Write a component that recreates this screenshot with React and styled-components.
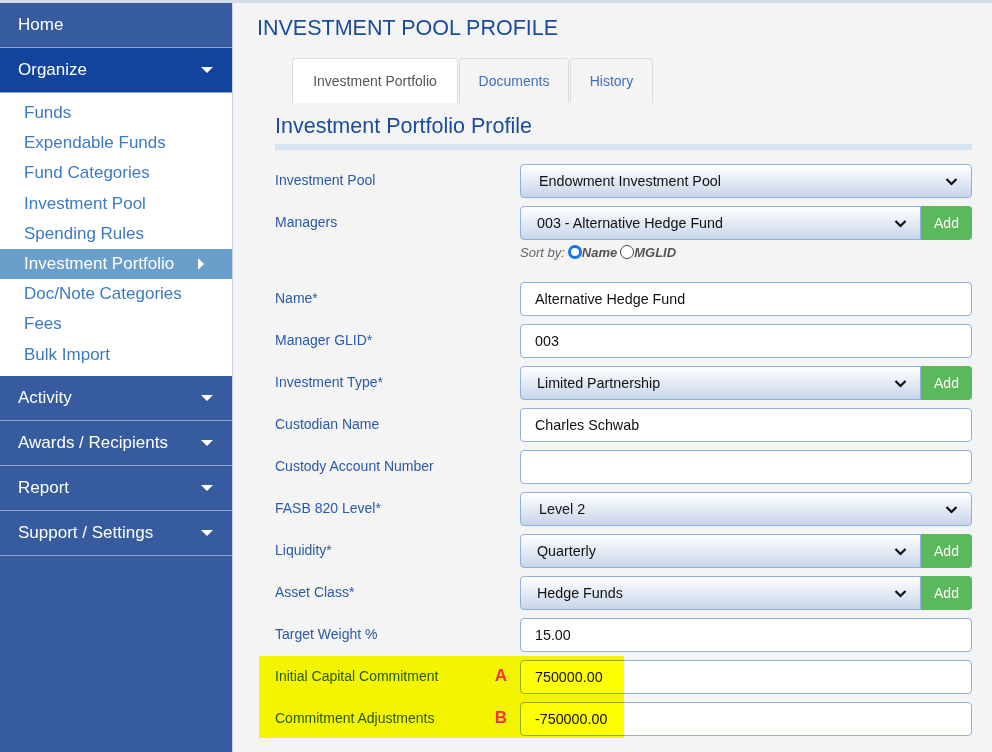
import React from "react";
import styled, { createGlobalStyle } from "styled-components";

const GlobalStyle = createGlobalStyle`
    html, body {
        margin: 0;
        padding: 0;
        background: #f4f4f4;
        font-family: "Liberation Sans", Arial, sans-serif;
    }
    * { box-sizing: border-box; }
`;

const Page = styled.div`
    display: flex;
    width: 992px;
    height: 752px;
    overflow: hidden;
    border-top: 3px solid #d3dbe8;
`;

const Sidebar = styled.nav`
    display: flex;
    flex-direction: column;
    width: 233px;
    flex-shrink: 0;
    background: #365c9f;
    border-right: 1px solid #c9d3e3;
`;

const MenuHeader = styled.div`
    display: flex;
    align-items: center;
    justify-content: space-between;
    height: 45px;
    padding: 0 18px;
    background: ${(p) => (p.open ? "#11449a" : "#365c9f")};
    border-bottom: 1px solid #8ea6cd;
    color: #ffffff;
    font-size: 17px;
`;

const Caret = styled.span`
    width: 0;
    height: 0;
    margin-right: 1px;
    border-left: 6px solid transparent;
    border-right: 6px solid transparent;
    border-top: 6px solid #ffffff;
`;

const RightCaret = styled.span`
    width: 0;
    height: 0;
    margin-right: 4px;
    border-top: 6px solid transparent;
    border-bottom: 6px solid transparent;
    border-left: 6px solid #ffffff;
`;

const SubMenu = styled.div`
    display: flex;
    flex-direction: column;
    background: #ffffff;
    padding: 5px 0 6px;
`;

const SubItem = styled.div`
    display: flex;
    align-items: center;
    justify-content: space-between;
    height: 30.2px;
    padding: 0 24px;
    font-size: 17px;
    color: ${(p) => (p.active ? "#ffffff" : "#3d7ac2")};
    background: ${(p) => (p.active ? "#6a9fcb" : "transparent")};
`;

const Main = styled.main`
    flex: 1;
    padding: 12px 20px 0 24px;
    background: #f4f4f4;
`;

const PageTitle = styled.h1`
    margin: 0;
    font-size: 21.5px;
    font-weight: normal;
    color: #1a4b9c;
    line-height: 26px;
`;

const Tabs = styled.div`
    display: flex;
    gap: 1px;
    margin: 17px 0 0 35px;
`;

const Tab = styled.div`
    display: flex;
    align-items: center;
    justify-content: center;
    height: 45px;
    width: ${(p) => p.w}px;
    border: 1px solid #dcdcdc;
    border-bottom: none;
    border-radius: 4px 4px 0 0;
    background: ${(p) => (p.active ? "#ffffff" : "#f4f4f4")};
    color: ${(p) => (p.active ? "#555555" : "#3f6fc0")};
    font-size: 14px;
`;

const Section = styled.section`
    margin-left: 18px;
`;

const SectionTitle = styled.h2`
    margin: 0;
    padding-top: 10px;
    font-size: 21.5px;
    font-weight: normal;
    color: #1a4b9c;
    line-height: 26px;
    padding-bottom: 5px;
    border-bottom: 6px solid #d8e3f2;
`;

const Form = styled.div`
    display: grid;
    grid-template-columns: 245px 1fr;
    row-gap: 8px;
    margin-top: 14px;
`;

const Label = styled.div`
    display: flex;
    justify-content: space-between;
    align-items: flex-start;
    padding-top: 8px;
    font-size: 14px;
    color: #2a5aa5;
`;

const Letter = styled.span`
    position: relative;
    z-index: 2;
    margin: -2px 13px 0 0;
    font-size: 17px;
    font-weight: bold;
    color: #f2333f;
`;

const Field = styled.div`
    display: flex;
    flex-direction: column;
    margin-bottom: ${(p) => p.mb || 0}px;
`;

const Group = styled.div`
    display: flex;
    height: 34px;
`;

const Select = styled.div`
    flex: 1;
    display: flex;
    align-items: center;
    justify-content: space-between;
    height: 34px;
    padding: 0 13px 0 ${(p) => p.pl || 18}px;
    border: 1px solid #8fb0dc;
    border-radius: ${(p) => (p.addon ? "4px 0 0 4px" : "4px")};
    background: linear-gradient(#ffffff, #c8d5ea);
    font-size: 14.3px;
    color: #111111;
`;

const AddButton = styled.div`
    display: flex;
    align-items: center;
    justify-content: center;
    width: 51px;
    height: 34px;
    background: #5cb85c;
    border-radius: 0 4px 4px 0;
    color: #ffffff;
    font-size: 14px;
`;

const Input = styled.div`
    display: flex;
    align-items: center;
    height: 34px;
    padding: 0 14px;
    background: #ffffff;
    border: 1px solid #8fb0dc;
    border-radius: 4px;
    font-size: 14.3px;
    color: #111111;
`;

const SortBy = styled.div`
    display: flex;
    align-items: center;
    height: 20px;
    margin-top: 2px;
    font-size: 13px;
    font-style: italic;
    color: #666666;
`;

const Radio = styled.span`
    display: inline-block;
    width: 14px;
    height: 14px;
    margin: 0 0 0 3px;
    border-radius: 50%;
    border: ${(p) => (p.checked ? "3px solid #1a73e8" : "1px solid #444")};
    background: #ffffff;
`;

const Bold = styled.b`
    color: #555555;
`;

const HighlightWrap = styled.div`
    grid-column: 1 / -1;
    display: grid;
    grid-template-columns: 245px 1fr;
    row-gap: 8px;
    position: relative;
`;

const Highlight = styled.div`
    position: absolute;
    left: -16px;
    top: -4px;
    width: 365px;
    height: 82px;
    background: #ffff00;
    mix-blend-mode: multiply;
    z-index: 1;
    pointer-events: none;
`;

const Chevron = () => (
    <svg width="13" height="9" viewBox="0 0 13 9">
        <path d="M1.5 2 L6.5 7 L11.5 2" fill="none" stroke="#111" strokeWidth="2.2" />
    </svg>
);

const SelectBox = ({ value, addon, pl }) => (
    <Group>
        <Select addon={addon} pl={pl}>
            <span>{value}</span>
            <Chevron />
        </Select>
        {addon && <AddButton>Add</AddButton>}
    </Group>
);

const subItems = [
    "Funds",
    "Expendable Funds",
    "Fund Categories",
    "Investment Pool",
    "Spending Rules",
    "Investment Portfolio",
    "Doc/Note Categories",
    "Fees",
    "Bulk Import",
];

const App = () => {
    return (
        <>
            <GlobalStyle />
            <Page>
                <Sidebar>
                    <MenuHeader>Home</MenuHeader>
                    <MenuHeader open>
                        Organize <Caret />
                    </MenuHeader>
                    <SubMenu>
                        {subItems.map((item) => (
                            <SubItem key={item} active={item === "Investment Portfolio"}>
                                {item}
                                {item === "Investment Portfolio" && <RightCaret />}
                            </SubItem>
                        ))}
                    </SubMenu>
                    <MenuHeader>Activity <Caret /></MenuHeader>
                    <MenuHeader>Awards / Recipients <Caret /></MenuHeader>
                    <MenuHeader>Report <Caret /></MenuHeader>
                    <MenuHeader>Support / Settings <Caret /></MenuHeader>
                </Sidebar>
                <Main>
                    <PageTitle>INVESTMENT POOL PROFILE</PageTitle>
                    <Tabs>
                        <Tab active w={166}>Investment Portfolio</Tab>
                        <Tab w={110}>Documents</Tab>
                        <Tab w={83}>History</Tab>
                    </Tabs>
                    <Section>
                        <SectionTitle>Investment Portfolio Profile</SectionTitle>
                        <Form>
                            <Label>Investment Pool</Label>
                            <Field>
                                <SelectBox value="Endowment Investment Pool" />
                            </Field>

                            <Label>Managers</Label>
                            <Field mb={12}>
                                <SelectBox value="003 - Alternative Hedge Fund" addon pl={16} />
                                <SortBy>
                                    Sort by:
                                    <Radio checked />
                                    <Bold>Name</Bold>
                                    <Radio />
                                    <Bold>MGLID</Bold>
                                </SortBy>
                            </Field>

                            <Label>Name*</Label>
                            <Input>Alternative Hedge Fund</Input>

                            <Label>Manager GLID*</Label>
                            <Input>003</Input>

                            <Label>Investment Type*</Label>
                            <SelectBox value="Limited Partnership" addon pl={16} />

                            <Label>Custodian Name</Label>
                            <Input>Charles Schwab</Input>

                            <Label>Custody Account Number</Label>
                            <Input />

                            <Label>FASB 820 Level*</Label>
                            <SelectBox value="Level 2" />

                            <Label>Liquidity*</Label>
                            <SelectBox value="Quarterly" addon pl={16} />

                            <Label>Asset Class*</Label>
                            <SelectBox value="Hedge Funds" addon pl={16} />

                            <Label>Target Weight %</Label>
                            <Input>15.00</Input>

                            <HighlightWrap>
                                <Highlight />
                                <Label>
                                    Initial Capital Commitment <Letter>A</Letter>
                                </Label>
                                <Input>750000.00</Input>
                                <Label>
                                    Commitment Adjustments <Letter>B</Letter>
                                </Label>
                                <Input>-750000.00</Input>
                            </HighlightWrap>
                        </Form>
                    </Section>
                </Main>
            </Page>
        </>
    );
};

export default App;
